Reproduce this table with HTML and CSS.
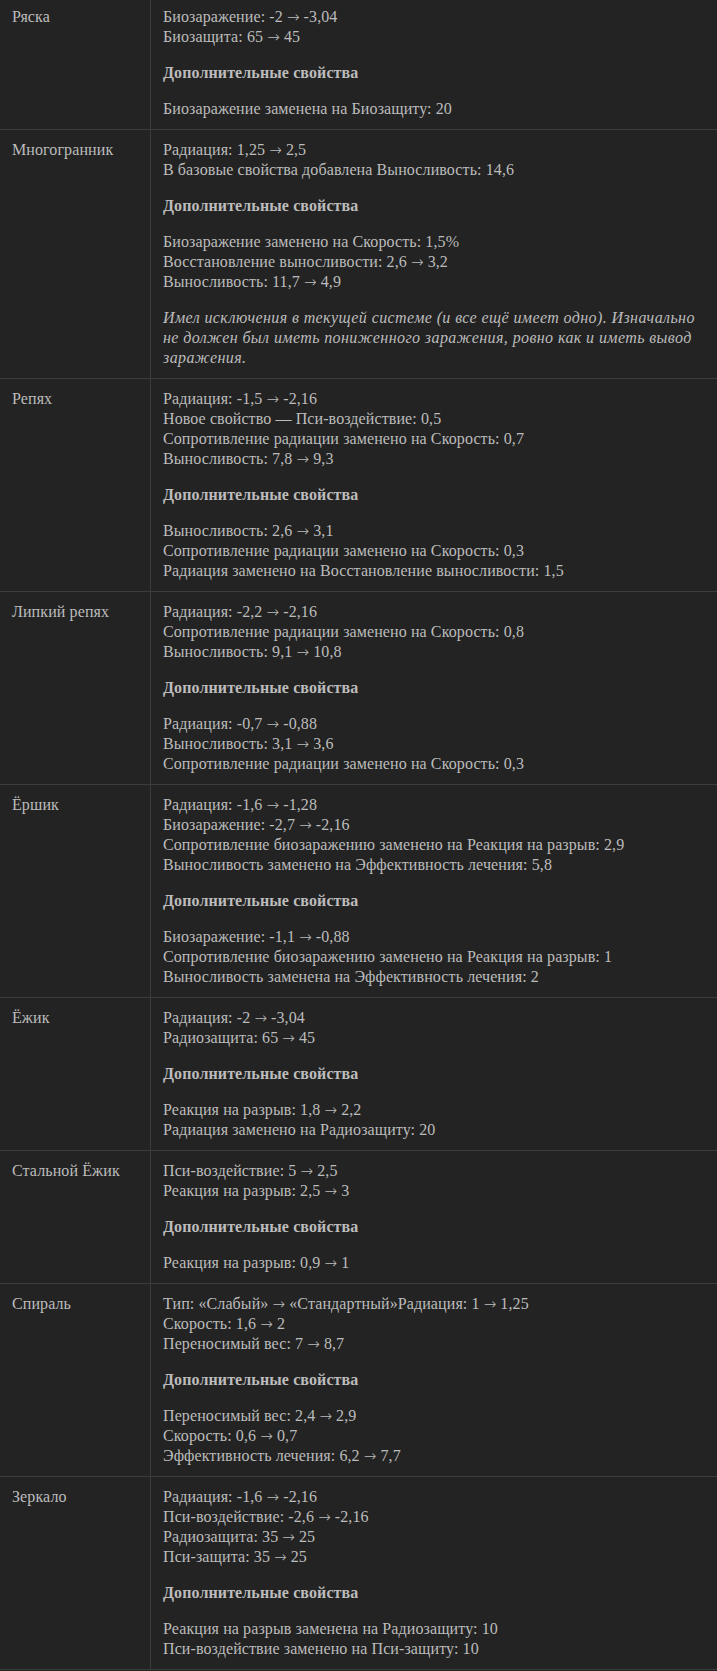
FILE: index.html
```html
<!DOCTYPE html>
<html lang="ru">
<head>
<meta charset="utf-8">
<link rel="stylesheet" href="styles.css">
</head>
<body>
<table class="changes">
<tbody>
<tr>
<td class="name">Ряска</td>
<td class="desc">
<p>Биозаражение: -2 <span class="arr">→</span> -3,04<br>Биозащита: 65 <span class="arr">→</span> 45</p>
<p class="sub">Дополнительные свойства</p>
<p>Биозаражение заменена на Биозащиту: 20</p>
</td>
</tr>
<tr>
<td class="name">Многогранник</td>
<td class="desc">
<p>Радиация: 1,25 <span class="arr">→</span> 2,5<br>В базовые свойства добавлена Выносливость: 14,6</p>
<p class="sub">Дополнительные свойства</p>
<p>Биозаражение заменено на Скорость: 1,5%<br>Восстановление выносливости: 2,6 <span class="arr">→</span> 3,2<br>Выносливость: 11,7 <span class="arr">→</span> 4,9</p>
<p class="note">Имел исключения в текущей системе (и все ещё имеет одно). Изначально не должен был иметь пониженного заражения, ровно как и иметь вывод заражения.</p>
</td>
</tr>
<tr>
<td class="name">Репях</td>
<td class="desc">
<p>Радиация: -1,5 <span class="arr">→</span> -2,16<br>Новое свойство — Пси-воздействие: 0,5<br>Сопротивление радиации заменено на Скорость: 0,7<br>Выносливость: 7,8 <span class="arr">→</span> 9,3</p>
<p class="sub">Дополнительные свойства</p>
<p>Выносливость: 2,6 <span class="arr">→</span> 3,1<br>Сопротивление радиации заменено на Скорость: 0,3<br>Радиация заменено на Восстановление выносливости: 1,5</p>
</td>
</tr>
<tr>
<td class="name">Липкий репях</td>
<td class="desc">
<p>Радиация: -2,2 <span class="arr">→</span> -2,16<br>Сопротивление радиации заменено на Скорость: 0,8<br>Выносливость: 9,1 <span class="arr">→</span> 10,8</p>
<p class="sub">Дополнительные свойства</p>
<p>Радиация: -0,7 <span class="arr">→</span> -0,88<br>Выносливость: 3,1 <span class="arr">→</span> 3,6<br>Сопротивление радиации заменено на Скорость: 0,3</p>
</td>
</tr>
<tr>
<td class="name">Ёршик</td>
<td class="desc">
<p>Радиация: -1,6 <span class="arr">→</span> -1,28<br>Биозаражение: -2,7 <span class="arr">→</span> -2,16<br>Сопротивление биозаражению заменено на Реакция на разрыв: 2,9<br>Выносливость заменено на Эффективность лечения: 5,8</p>
<p class="sub">Дополнительные свойства</p>
<p>Биозаражение: -1,1 <span class="arr">→</span> -0,88<br>Сопротивление биозаражению заменено на Реакция на разрыв: 1<br>Выносливость заменена на Эффективность лечения: 2</p>
</td>
</tr>
<tr>
<td class="name">Ёжик</td>
<td class="desc">
<p>Радиация: -2 <span class="arr">→</span> -3,04<br>Радиозащита: 65 <span class="arr">→</span> 45</p>
<p class="sub">Дополнительные свойства</p>
<p>Реакция на разрыв: 1,8 <span class="arr">→</span> 2,2<br>Радиация заменено на Радиозащиту: 20</p>
</td>
</tr>
<tr>
<td class="name">Стальной Ёжик</td>
<td class="desc">
<p>Пси-воздействие: 5 <span class="arr">→</span> 2,5<br>Реакция на разрыв: 2,5 <span class="arr">→</span> 3</p>
<p class="sub">Дополнительные свойства</p>
<p>Реакция на разрыв: 0,9 <span class="arr">→</span> 1</p>
</td>
</tr>
<tr>
<td class="name">Спираль</td>
<td class="desc">
<p>Тип: «Слабый» <span class="arr">→</span> «Стандартный»Радиация: 1 <span class="arr">→</span> 1,25<br>Скорость: 1,6 <span class="arr">→</span> 2<br>Переносимый вес: 7 <span class="arr">→</span> 8,7</p>
<p class="sub">Дополнительные свойства</p>
<p>Переносимый вес: 2,4 <span class="arr">→</span> 2,9<br>Скорость: 0,6 <span class="arr">→</span> 0,7<br>Эффективность лечения: 6,2 <span class="arr">→</span> 7,7</p>
</td>
</tr>
<tr>
<td class="name">Зеркало</td>
<td class="desc">
<p>Радиация: -1,6 <span class="arr">→</span> -2,16<br>Пси-воздействие: -2,6 <span class="arr">→</span> -2,16<br>Радиозащита: 35 <span class="arr">→</span> 25<br>Пси-защита: 35 <span class="arr">→</span> 25</p>
<p class="sub">Дополнительные свойства</p>
<p>Реакция на разрыв заменена на Радиозащиту: 10<br>Пси-воздействие заменено на Пси-защиту: 10</p>
</td>
</tr>
</tbody>
</table>
</body>
</html>
```
FILE: styles.css
```css
html, body {
  margin: 0;
  padding: 0;
  background: #232323;
}
body {
  font-family: "Liberation Serif", "DejaVu Serif", serif;
  font-size: 16px;
  line-height: 20px;
  letter-spacing: 0.1px;
  color: #bcbcbc;
}
.changes {
  width: 100%;
  border-collapse: collapse;
  margin-top: -3px;
}
.changes td {
  vertical-align: top;
  padding: 10px 12px;
  border-bottom: 1px solid #3c3c3c;
}
.changes td.name {
  width: 126px;
  border-right: 1px solid #3c3c3c;
}
.desc p {
  margin: 16px 0;
}
.desc p:first-child {
  margin-top: 0;
}
.desc p:last-child {
  margin-bottom: 0;
}
.desc .sub {
  font-weight: bold;
}
.desc .note {
  font-style: italic;
  letter-spacing: 0.4px;
}
.arr {
  font-family: "DejaVu Sans ExtraLight", "DejaVu Sans", sans-serif;
  font-weight: 200;
  font-size: 15px;
  line-height: 1;
  letter-spacing: 0;
}
```
